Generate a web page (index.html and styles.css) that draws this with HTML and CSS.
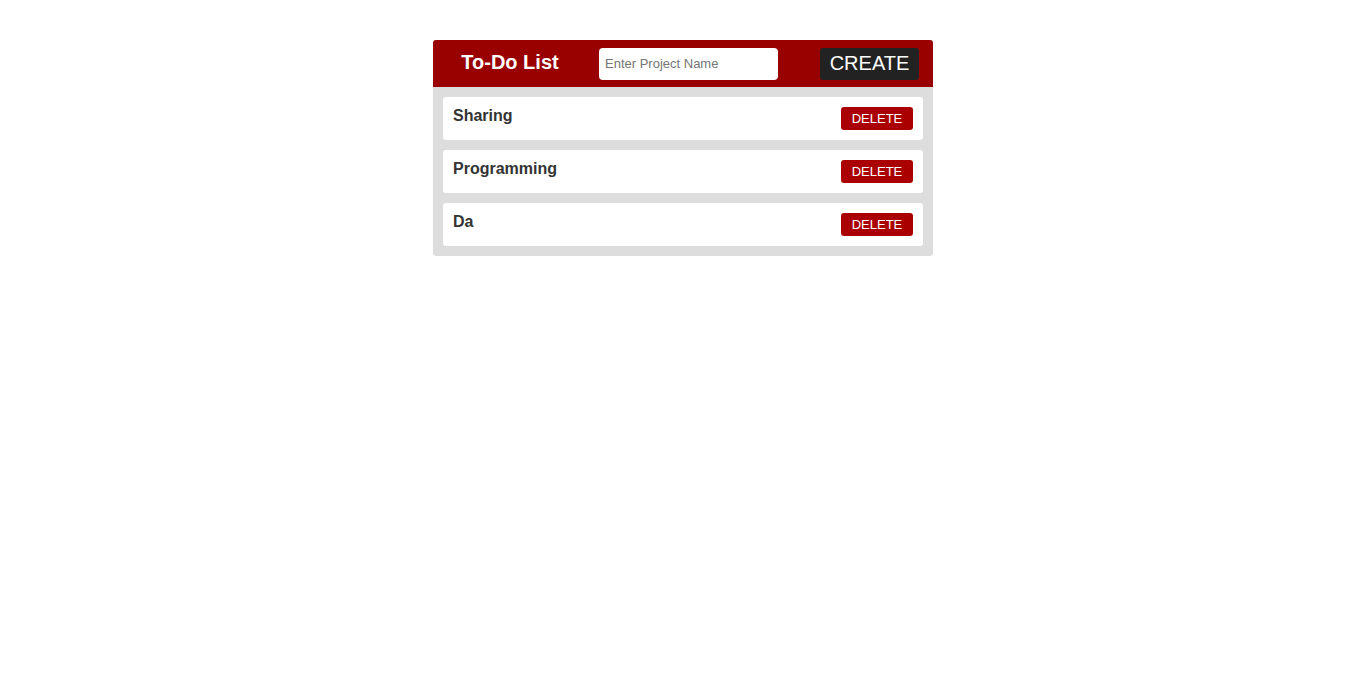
FILE: index.html
```html
<!DOCTYPE html>
<html>
<head>
<meta charset="utf-8">
<title>To-Do List</title>
<link rel="stylesheet" href="styles.css">
</head>
<body>
<div class="app">
  <div class="header">
    <div class="title">To-Do List</div>
    <input class="project-input" type="text" placeholder="Enter Project Name">
    <button class="create-btn">CREATE</button>
  </div>
  <div class="list">
    <div class="item"><span class="item-name">Sharing</span><button class="delete-btn">DELETE</button></div>
    <div class="item"><span class="item-name">Programming</span><button class="delete-btn">DELETE</button></div>
    <div class="item"><span class="item-name">Da</span><button class="delete-btn">DELETE</button></div>
  </div>
</div>
</body>
</html>
```

FILE: styles.css
```css
html, body {
  margin: 0;
  padding: 0;
  background: #ffffff;
  font-family: "Liberation Sans", Arial, sans-serif;
}
.app {
  width: 500px;
  margin: 40px auto 0;
  border-radius: 3px;
  overflow: hidden;
}
.header {
  display: flex;
  align-items: center;
  height: 47px;
  background: #990000;
  padding: 0 14px 0 0;
}
.title {
  flex: 0 0 154px;
  text-align: center;
  color: #ffffff;
  font-size: 20px;
  font-weight: bold;
  margin-bottom: 3px;
}
.project-input {
  margin-left: 12px;
  width: 179px;
  height: 32px;
  box-sizing: border-box;
  border: none;
  border-radius: 4px;
  padding: 0 6px;
  font-family: "Liberation Sans", Arial, sans-serif;
  font-size: 13px;
  outline: none;
}
.project-input::placeholder {
  color: #757575;
}
.create-btn {
  margin-left: auto;
  width: 99px;
  height: 32px;
  border: none;
  border-radius: 3px;
  background: #222222;
  color: #ffffff;
  font-family: "Liberation Sans", Arial, sans-serif;
  font-size: 20px;
  padding: 0;
}
.list {
  background: #dddddd;
  padding: 10px;
  display: flex;
  flex-direction: column;
  gap: 10px;
}
.item {
  background: #ffffff;
  border-radius: 3px;
  display: flex;
  justify-content: space-between;
  align-items: flex-start;
  padding: 10px;
}
.item-name {
  font-size: 16px;
  font-weight: bold;
  color: #333333;
  line-height: 18px;
}
.delete-btn {
  width: 72px;
  height: 23px;
  border: none;
  border-radius: 3px;
  background: #aa0000;
  color: #ffffff;
  font-family: "Liberation Sans", Arial, sans-serif;
  font-size: 13px;
  padding: 0;
}
```
